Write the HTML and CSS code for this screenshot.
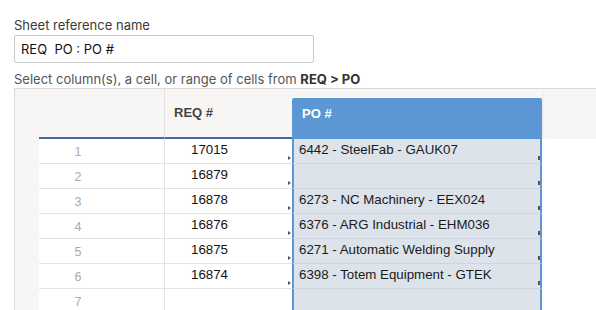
FILE: index.html
```html
<!DOCTYPE html>
<html>
<head>
<meta charset="utf-8">
<link rel="stylesheet" href="styles.css">
</head>
<body>
<div class="page">
  <div class="label">Sheet reference name</div>
  <div class="input">REQ&nbsp; PO : PO #</div>
  <div class="hint">Select column(s), a cell, or range of cells from <b>REQ &gt; PO</b></div>
  <div class="sheet">
    <div class="gutter"></div>
    <div class="table">
      <div class="hcell hnum"></div>
      <div class="hcell hreq">REQ #</div>
      <div class="hcell hpo"><span class="po-head">PO #</span></div>
      <div class="hcell hrest"></div>

      <div class="num">1</div><div class="req">17015<i class="tri"></i></div><div class="po">6442 - SteelFab - GAUK07<i class="mark"></i></div><div class="rest"></div>
      <div class="num">2</div><div class="req">16879<i class="tri"></i></div><div class="po"><i class="mark"></i></div><div class="rest"></div>
      <div class="num">3</div><div class="req">16878<i class="tri"></i></div><div class="po">6273 - NC Machinery - EEX024<i class="mark"></i></div><div class="rest"></div>
      <div class="num">4</div><div class="req">16876<i class="tri"></i></div><div class="po">6376 - ARG Industrial - EHM036<i class="mark"></i></div><div class="rest"></div>
      <div class="num">5</div><div class="req">16875<i class="tri"></i></div><div class="po">6271 - Automatic Welding Supply<i class="mark"></i></div><div class="rest"></div>
      <div class="num">6</div><div class="req">16874<i class="tri"></i></div><div class="po">6398 - Totem Equipment - GTEK<i class="mark"></i></div><div class="rest"></div>
      <div class="num">7</div><div class="req"></div><div class="po"></div><div class="rest"></div>
    </div>
  </div>
</div>
</body>
</html>
```

FILE: styles.css
```css
html, body {
  margin: 0;
  padding: 0;
  background: #ffffff;
  overflow: hidden;
}
.page {
  width: 596px;
  height: 310px;
  overflow: hidden;
  padding: 17px 0 0 14px;
  box-sizing: border-box;
  font-family: Inter, "Open Sans", sans-serif;
  color: #333;
}
.label {
  font-size: 13px;
  line-height: 16px;
  color: #3a3a3a;
}
.input {
  margin-top: 2px;
  width: 300px;
  height: 28px;
  box-sizing: border-box;
  border: 1px solid #c9c9c9;
  border-radius: 2px;
  padding: 0 0 0 6px;
  font-size: 13px;
  line-height: 26px;
  color: #111;
}
.hint {
  margin-top: 8px;
  font-size: 13px;
  line-height: 16px;
  color: #555;
}
.hint b {
  color: #333;
  font-weight: 700;
}
.sheet {
  margin-top: 1px;
  display: flex;
  border-top: 1px solid #d9d9d9;
  border-left: 1px solid #d9d9d9;
  background: #f7f6f5;
  height: 240px;
  font-family: "Liberation Sans", Arial, sans-serif;
}
.gutter {
  width: 24px;
  flex: none;
}
.table {
  flex: 1;
  display: grid;
  grid-template-columns: 125px 128px 250px 1fr;
  grid-template-rows: 50px repeat(7, 25px);
  align-content: start;
}
.hcell {
  box-sizing: border-box;
}
.hnum {
  border-bottom: 2px solid #4a68a0;
}
.hreq {
  border-left: 1px solid #e2e2e2;
  border-bottom: 2px solid #4a68a0;
  padding: 16px 0 0 9px;
  font-weight: 700;
  font-size: 13px;
  line-height: 16px;
  color: #444;
}
.hpo {
  padding-top: 9px;
  display: flex;
  box-shadow: 3px 0 4px -2px rgba(0,0,0,0.06);
}
.po-head {
  flex: 1;
  background: #5b97d5;
  border-radius: 2px 2px 0 0;
  color: #fff;
  font-weight: 700;
  font-size: 13px;
  line-height: 16px;
  padding: 8px 0 0 10px;
}
.num, .req, .po, .rest {
  box-sizing: border-box;
  background: #fff;
  border-bottom: 1px solid #e3e3e3;
  position: relative;
}
.num {
  text-align: center;
  padding-right: 47px;
  font-size: 12.5px;
  line-height: 26px;
  color: #aaa;
}
.req {
  border-left: 1px solid #e2e2e2;
  padding: 1px 0 0 26px;
  font-size: 13.3px;
  line-height: 20px;
  color: #111;
}
.po {
  background: #dce3eb;
  border-left: 2px solid #5b97d5;
  border-right: 2px solid #5b97d5;
  border-bottom-color: #d0d7e0;
  padding: 1px 0 0 5px;
  font-size: 13.3px;
  line-height: 20px;
  color: #1a1a1a;
  white-space: nowrap;
  box-shadow: 3px 0 4px -2px rgba(0,0,0,0.08);
}
.rest {
  border-bottom: none;
}
.tri {
  position: absolute;
  right: 1px;
  bottom: 3px;
  width: 0;
  height: 0;
  border-top: 2px solid transparent;
  border-bottom: 2px solid transparent;
  border-left: 3px solid #555;
}
.mark {
  position: absolute;
  right: 0;
  bottom: 3px;
  width: 2px;
  height: 4px;
  background: #555;
}
```
